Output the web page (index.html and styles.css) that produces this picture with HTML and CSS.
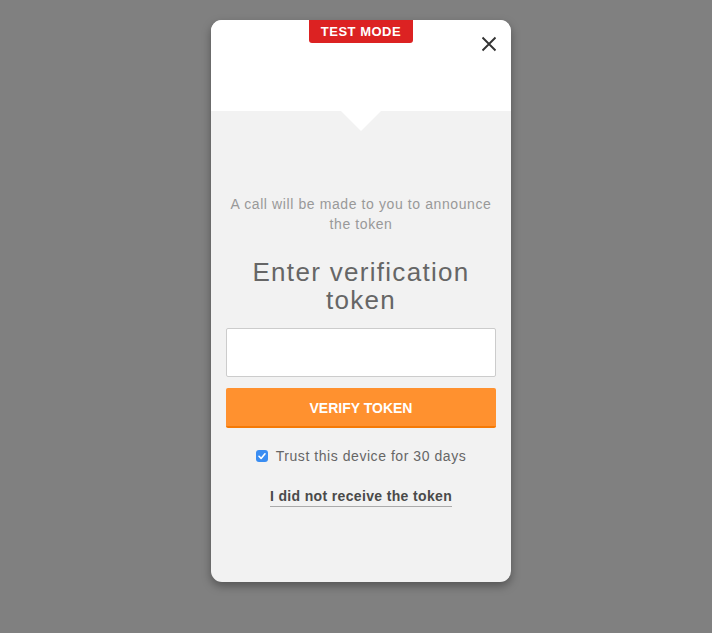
FILE: index.html
```html
<!DOCTYPE html>
<html>
<head>
<meta charset="utf-8">
<link rel="stylesheet" href="styles.css">
</head>
<body>
<div class="modal">
  <div class="modal-header">
    <div class="badge">TEST MODE</div>
    <button class="close" aria-label="Close">
      <svg width="16" height="16" viewBox="0 0 16 16"><path d="M1.5 1.5 L14.5 14.5 M14.5 1.5 L1.5 14.5" stroke="#333" stroke-width="1.9" fill="none"/></svg>
    </button>
  </div>
  <div class="modal-body">
    <p class="info">A call will be made to you to announce the token</p>
    <h1 class="title">Enter verification token</h1>
    <input class="token-input" type="text">
    <button class="verify">VERIFY TOKEN</button>
    <label class="trust">
      <span class="check">
        <svg width="12" height="12" viewBox="0 0 12 12"><path d="M3 6.3 L5.1 8.4 L9 3.8" stroke="#fff" stroke-width="1.6" fill="none" stroke-linecap="round" stroke-linejoin="round"/></svg>
      </span>
      <span>Trust this device for 30 days</span>
    </label>
    <a class="resend" href="#">I did not receive the token</a>
  </div>
</div>
</body>
</html>
```

FILE: styles.css
```css
html, body {
  margin: 0;
  padding: 0;
  background: #808080;
  height: 100%;
}
body {
  font-family: "Liberation Sans", Arial, Helvetica, sans-serif;
}
.modal {
  width: 300px;
  height: 562px;
  margin: 20px 0 0 211px;
  border-radius: 11px;
  background: #f2f2f2;
  box-shadow: 0 4px 10px rgba(0, 0, 0, 0.35);
  overflow: hidden;
  display: flex;
  flex-direction: column;
}
.modal-header {
  position: relative;
  height: 91px;
  background: #fff;
  flex: none;
}
.modal-header::after {
  content: "";
  position: absolute;
  left: 130px;
  bottom: -20px;
  border-left: 20px solid transparent;
  border-right: 20px solid transparent;
  border-top: 20px solid #fff;
  z-index: 1;
}
.badge {
  position: absolute;
  top: 0;
  left: 98px;
  width: 104px;
  height: 23px;
  background: #dc2222;
  color: #fff;
  font-weight: bold;
  font-size: 13px;
  letter-spacing: 0.5px;
  line-height: 24px;
  text-align: center;
  border-radius: 0 0 3px 3px;
}
.close {
  position: absolute;
  top: 16px;
  left: 270px;
  width: 16px;
  height: 16px;
  padding: 0;
  border: 0;
  background: none;
  display: flex;
}
.modal-body {
  flex: 1;
  padding: 83px 15px 0;
  display: flex;
  flex-direction: column;
  align-items: stretch;
  text-align: center;
}
.info {
  margin: 0;
  font-size: 14px;
  line-height: 20px;
  letter-spacing: 0.6px;
  color: #999;
  padding: 0 2px;
}
.title {
  margin: 24px 0 0;
  font-size: 26px;
  font-weight: normal;
  line-height: 28px;
  letter-spacing: 1.3px;
  color: #666;
}
.token-input {
  margin: 14px 0 0;
  height: 49px;
  box-sizing: border-box;
  border: 1px solid #ccc;
  border-radius: 2px;
  background: #fff;
  padding: 0 10px;
  font-size: 16px;
}
.verify {
  margin: 11px 0 0;
  height: 40px;
  box-sizing: border-box;
  border: 0;
  border-bottom: 2px solid #f57a06;
  border-radius: 2px;
  background: #ff912f;
  color: #fff;
  font-family: "Liberation Sans", Arial, sans-serif;
  font-weight: bold;
  font-size: 14px;
  padding: 1px 0 0;
}
.trust {
  margin: 18px 0 0;
  display: flex;
  justify-content: center;
  align-items: center;
  gap: 8px;
  font-size: 14px;
  line-height: 20px;
  letter-spacing: 0.55px;
  color: #666;
  padding-right: 0;
}
.check {
  width: 12px;
  height: 12px;
  background: #3a8df2;
  border-radius: 3px;
  display: flex;
}
.resend {
  margin: 20px auto 0;
  font-size: 14px;
  font-weight: bold;
  line-height: 20px;
  letter-spacing: 0.35px;
  color: #4a4a4a;
  text-decoration: none;
  border-bottom: 1px solid #aaa;
}
```
